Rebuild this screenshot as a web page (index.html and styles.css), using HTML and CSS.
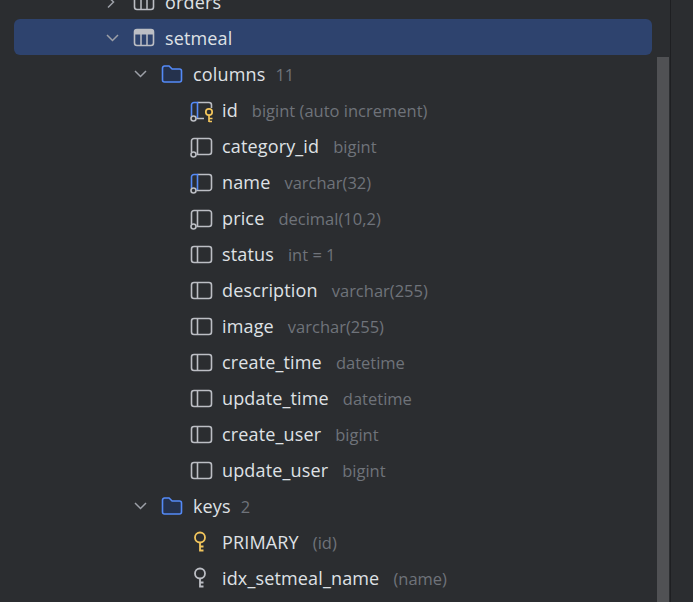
FILE: index.html
```html
<!DOCTYPE html>
<html lang="en">
<head>
<meta charset="utf-8">
<title>Database tree</title>
<link rel="stylesheet" href="styles.css">
</head>
<body>
<svg class="defs" width="0" height="0" aria-hidden="true">
  <defs>
    <symbol id="i-table" viewBox="0 0 22 20">
      <rect x="1.5" y="1.5" width="19" height="16" rx="2.5" fill="none" stroke="#bcbec4" stroke-width="1.6"/>
      <path d="M1.5 3.500a2 2 0 0 1 2-2h15a2 2 0 0 1 2 2V6.500h-19z" fill="#bcbec4"/>
      <path d="M8 2v15.500M14 2v15.500" stroke="#bcbec4" stroke-width="1.5"/>
    </symbol>
    <symbol id="i-folder" viewBox="0 0 22 20">
      <path d="M1.500 4a2 2 0 0 1 2-2h4.600l3 3H18.500a2 2 0 0 1 2 2v9a2 2 0 0 1-2 2h-15a2 2 0 0 1-2-2z" fill="#25324d" stroke="#548af7" stroke-width="1.600" stroke-linejoin="round"/>
    </symbol>
    <symbol id="i-col" viewBox="0 0 24 22">
      <rect x="1.500" y="1.500" width="20" height="16" rx="2.500" fill="none" stroke="#bcbec4" stroke-width="1.600"/>
      <path d="M7.500 1.500v16" stroke="#bcbec4" stroke-width="1.600"/>
    </symbol>
    <symbol id="i-fk" viewBox="0 0 24 22">
      <path d="M1.500 15V4A2.500 2.500 0 0 1 4 1.500H19A2.500 2.500 0 0 1 21.500 4V15A2.500 2.500 0 0 1 19 17.500H6.500M7.500 1.500V17" fill="none" stroke="#bcbec4" stroke-width="1.600"/>
      <circle cx="3.500" cy="17.500" r="2.500" fill="#2b2d30" stroke="#bcbec4" stroke-width="1.600"/>
    </symbol>
    <symbol id="i-fk-blue" viewBox="0 0 24 22">
      <path d="M6.500 17.500H19A2.500 2.500 0 0 0 21.500 15V4A2.500 2.500 0 0 0 19 1.500H7.500" fill="none" stroke="#bcbec4" stroke-width="1.600"/>
      <path d="M1.500 15V4A2.500 2.500 0 0 1 4 1.500H7.500V17" fill="none" stroke="#548af7" stroke-width="1.600"/>
      <circle cx="3.500" cy="17.500" r="2.500" fill="#2b2d30" stroke="#bcbec4" stroke-width="1.600"/>
    </symbol>
    <symbol id="i-pk" viewBox="0 0 24 22">
      <path d="M6.500 17.500H14M21.500 7V4A2.500 2.500 0 0 0 19 1.500H7.500" fill="none" stroke="#bcbec4" stroke-width="1.600"/>
      <path d="M1.500 15V4A2.500 2.500 0 0 1 4 1.500H7.500V17" fill="none" stroke="#548af7" stroke-width="1.600"/>
      <circle cx="3.500" cy="17.500" r="2.500" fill="#2b2d30" stroke="#bcbec4" stroke-width="1.600"/>
      <circle cx="19" cy="11" r="3.200" fill="none" stroke="#f2c55c" stroke-width="1.700"/>
      <path d="M19 14V21M19 17.500H22.500M19 20.500H22" fill="none" stroke="#f2c55c" stroke-width="1.700"/>
    </symbol>
    <symbol id="i-key" viewBox="0 0 16 22">
      <circle cx="8" cy="6.500" r="5" fill="none" stroke="currentColor" stroke-width="1.800"/>
      <path d="M8 11.500V20.500M8 15.500h3.500M8 19.500h3.500" fill="none" stroke="currentColor" stroke-width="1.800"/>
    </symbol>
    <symbol id="i-down" viewBox="0 0 14 10">
      <path d="M1 2l5.500 5.500L12 2" fill="none" stroke="#9da0a8" stroke-width="1.500"/>
    </symbol>
    <symbol id="i-right" viewBox="0 0 10 14">
      <path d="M2 1.500L7.500 7 2 12.500" fill="none" stroke="#9da0a8" stroke-width="1.500"/>
    </symbol>
  </defs>
</svg>

<div class="panel">
  <div class="tree">
    <div class="row lvl-table">
      <svg class="arrow-r"><use href="#i-right"/></svg>
      <svg class="ic-big"><use href="#i-table"/></svg>
      <span class="name">orders</span>
    </div>
    <div class="row lvl-table selected">
      <svg class="arrow-d"><use href="#i-down"/></svg>
      <svg class="ic-big"><use href="#i-table"/></svg>
      <span class="name">setmeal</span>
    </div>
    <div class="row lvl-folder">
      <svg class="arrow-d"><use href="#i-down"/></svg>
      <svg class="ic-big"><use href="#i-folder"/></svg>
      <span class="name">columns</span><span class="meta">11</span>
    </div>
    <div class="row lvl-item">
      <svg class="ic-item"><use href="#i-pk"/></svg>
      <span class="name">id</span><span class="meta">bigint (auto increment)</span>
    </div>
    <div class="row lvl-item">
      <svg class="ic-item"><use href="#i-fk"/></svg>
      <span class="name">category_id</span><span class="meta">bigint</span>
    </div>
    <div class="row lvl-item">
      <svg class="ic-item"><use href="#i-fk-blue"/></svg>
      <span class="name">name</span><span class="meta">varchar(32)</span>
    </div>
    <div class="row lvl-item">
      <svg class="ic-item"><use href="#i-fk"/></svg>
      <span class="name">price</span><span class="meta">decimal(10,2)</span>
    </div>
    <div class="row lvl-item">
      <svg class="ic-item"><use href="#i-col"/></svg>
      <span class="name">status</span><span class="meta">int = 1</span>
    </div>
    <div class="row lvl-item">
      <svg class="ic-item"><use href="#i-col"/></svg>
      <span class="name">description</span><span class="meta">varchar(255)</span>
    </div>
    <div class="row lvl-item">
      <svg class="ic-item"><use href="#i-col"/></svg>
      <span class="name">image</span><span class="meta">varchar(255)</span>
    </div>
    <div class="row lvl-item">
      <svg class="ic-item"><use href="#i-col"/></svg>
      <span class="name">create_time</span><span class="meta">datetime</span>
    </div>
    <div class="row lvl-item">
      <svg class="ic-item"><use href="#i-col"/></svg>
      <span class="name">update_time</span><span class="meta">datetime</span>
    </div>
    <div class="row lvl-item">
      <svg class="ic-item"><use href="#i-col"/></svg>
      <span class="name">create_user</span><span class="meta">bigint</span>
    </div>
    <div class="row lvl-item">
      <svg class="ic-item"><use href="#i-col"/></svg>
      <span class="name">update_user</span><span class="meta">bigint</span>
    </div>
    <div class="row lvl-folder">
      <svg class="arrow-d"><use href="#i-down"/></svg>
      <svg class="ic-big"><use href="#i-folder"/></svg>
      <span class="name">keys</span><span class="meta">2</span>
    </div>
    <div class="row lvl-item">
      <svg class="ic-key gold"><use href="#i-key"/></svg>
      <span class="name">PRIMARY</span><span class="meta">(id)</span>
    </div>
    <div class="row lvl-item">
      <svg class="ic-key grey"><use href="#i-key"/></svg>
      <span class="name">idx_setmeal_name</span><span class="meta">(name)</span>
    </div>
  </div>
  <div class="scrollbar"></div>
</div>
</body>
</html>
```
FILE: styles.css
```css
* { box-sizing: border-box; }

html, body {
  margin: 0;
  height: 100%;
  overflow: hidden;
  background: #2b2d30;
}

.defs { position: absolute; }

.panel {
  position: relative;
  width: 693px;
  height: 602px;
  overflow: hidden;
  font-family: "Open Sans", "Noto Sans", sans-serif;
  font-size: 18px;
  color: #dfe1e5;
}

.panel::after {
  content: "";
  position: absolute;
  left: 670px;
  top: 0;
  bottom: 0;
  width: 1px;
  background: #1e1f22;
}

.tree {
  display: flex;
  flex-direction: column;
  margin: -17px 41px 0 14px;
}

.row {
  display: flex;
  align-items: center;
  height: 36px;
  padding-top: 2px;
  flex: none;
  white-space: nowrap;
}

.row.selected {
  background: #2e436e;
  border-radius: 6px;
}

.lvl-table { padding-left: 92px; }
.lvl-folder { padding-left: 120px; }
.lvl-item { padding-left: 176px; }

.arrow-d { width: 14px; height: 10px; margin-right: 14px; flex: none; }
.arrow-r { width: 10px; height: 14px; margin-right: 18px; flex: none; }

.ic-big { width: 22px; height: 20px; margin-left: -1px; margin-right: 10px; flex: none; }

.ic-item { width: 24px; height: 22px; margin-top: 4px; margin-right: 8px; flex: none; }

.ic-key { width: 16px; height: 22px; margin-left: 2px; margin-right: 14px; flex: none; }
.gold { color: #f2c55c; }
.grey { color: #bcbec4; }

.name { color: #dfe1e5; letter-spacing: 0.15px; }

.meta {
  margin-left: 14px;
  font-size: 16.5px;
  color: #6f737a;
}

.lvl-folder .meta { margin-left: 10px; }

.scrollbar {
  position: absolute;
  left: 657px;
  top: 57px;
  bottom: 0;
  width: 12px;
  background: #505154;
}
```
